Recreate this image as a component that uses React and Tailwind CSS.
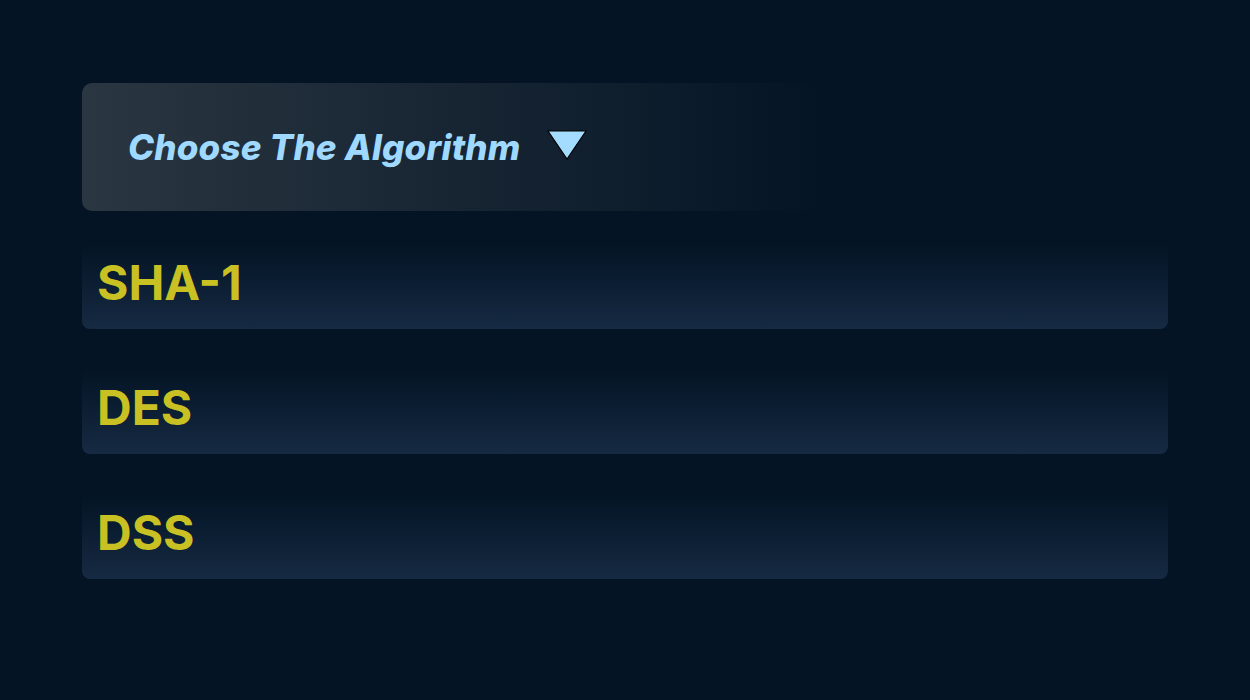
import React from "react";

const rows = ["SHA-1", "DES", "DSS"];

export default function App() {
  return (
    <div
      className="w-[1250px] h-[700px] bg-[#041424] pt-[83px] px-[82px]"
      style={{ fontFamily: "Inter, 'Noto Sans', sans-serif" }}
    >
      <div className="h-[128px] rounded-[10px] bg-gradient-to-r from-[#2a3641] via-[#0f1e2d] via-50% to-[#041424] to-[68%] flex items-center pl-[46px] pr-4">
        <span className="italic font-extrabold text-[35px] tracking-[0.2px] text-[#9fd9ff] leading-none">
          Choose The Algorithm
        </span>
        <svg width="40" height="30" viewBox="0 0 40 30" className="ml-[27px] -mt-[4px]">
          <polygon points="1,1 39,1 20,29" fill="#a3dcff" stroke="#000" strokeWidth="1.2" />
        </svg>
      </div>
      <div className="mt-[18px] flex flex-col gap-[25px]">
        {rows.map((r) => (
          <div
            key={r}
            className="h-[100px] rounded-[8px] bg-gradient-to-b from-[#041424] from-15% to-[#162a43] flex items-center pl-[15px] pt-[8px]"
          >
            <span className="font-bold text-[48px] text-[#c9c123] leading-none">{r}</span>
          </div>
        ))}
      </div>
    </div>
  );
}
